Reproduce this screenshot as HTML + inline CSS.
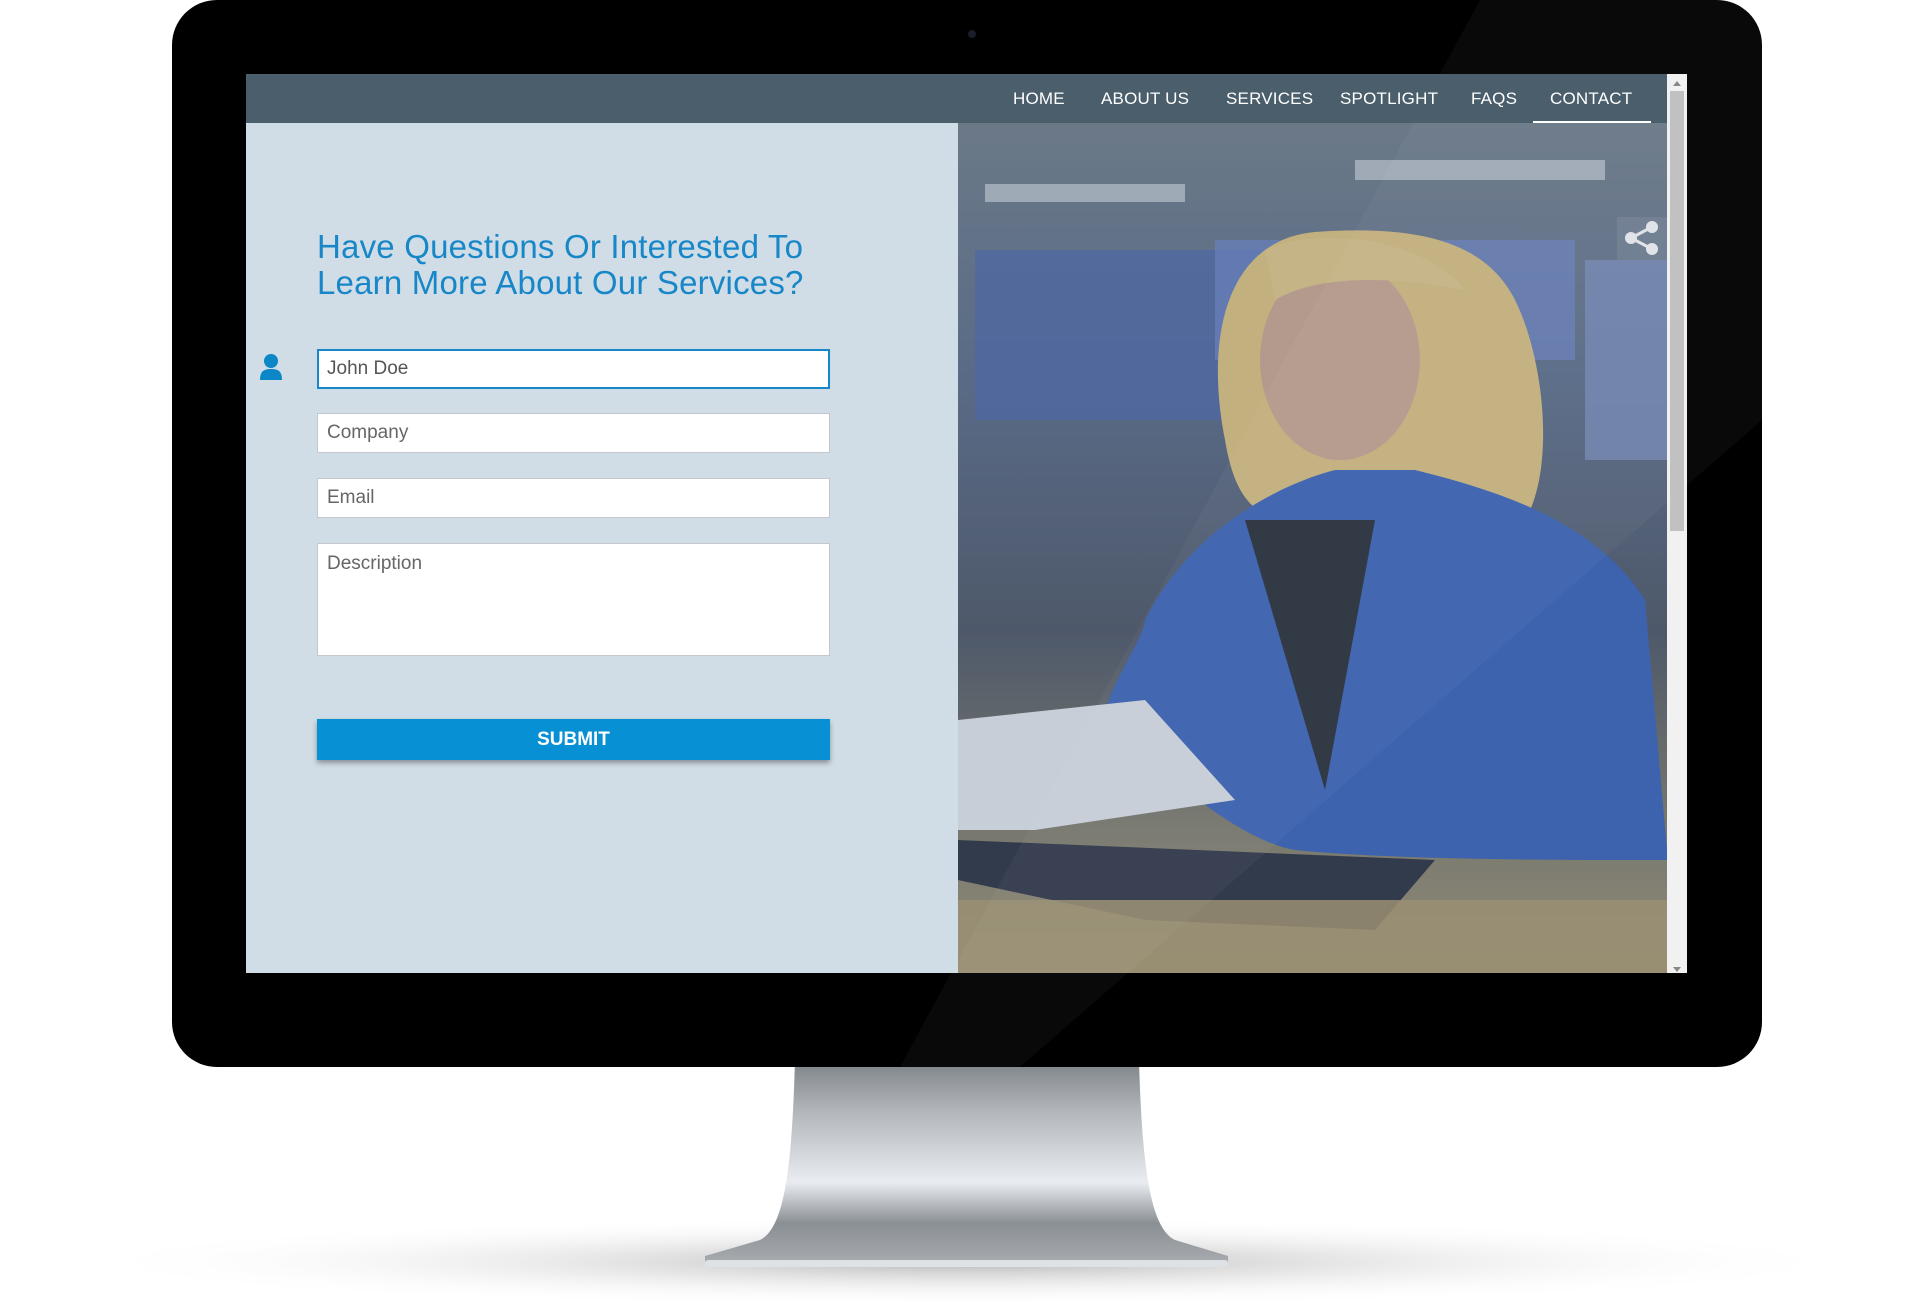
<!DOCTYPE html>
<html><head><meta charset="utf-8">
<style>
*{margin:0;padding:0;box-sizing:border-box}
html,body{width:1932px;height:1301px;overflow:hidden;background:#fff;font-family:"Liberation Sans",sans-serif}
.abs{position:absolute}
.nav a{position:absolute;top:89px;color:#fff;font-size:17px;letter-spacing:0.2px;text-decoration:none}
.inp{position:absolute;left:317px;width:513px;background:#fff;border:1px solid #c4c8cc;color:#666;font-size:19px;padding-left:9px}
</style></head><body>
<svg class="abs" style="left:0;top:0" width="1932" height="1301">
<defs>
<radialGradient id="sh" cx="50%" cy="50%" r="50%"><stop offset="0" stop-color="#999" stop-opacity=".7"/><stop offset="1" stop-color="#fff" stop-opacity="0"/></radialGradient>
<linearGradient id="neck" x1="0" y1="0" x2="0" y2="1">
<stop offset="0" stop-color="#7d8286"/><stop offset=".25" stop-color="#b2b6ba"/><stop offset=".6" stop-color="#e9edf2"/><stop offset=".8" stop-color="#8a8f94"/><stop offset="1" stop-color="#a8acb1"/></linearGradient>
<linearGradient id="img" x1="0" y1="0" x2="0" y2="1">
<stop offset="0" stop-color="#6f7c88"/><stop offset=".3" stop-color="#5a6a88"/><stop offset=".6" stop-color="#4c5464"/><stop offset=".82" stop-color="#7c7868"/><stop offset="1" stop-color="#a09478"/></linearGradient>
</defs>
<ellipse cx="966" cy="1262" rx="900" ry="45" fill="url(#sh)"/>
<path d="M795 1060 L1139 1060 C1142 1165 1150 1228 1175 1240 L1228 1256 L1228 1264 L705 1264 L705 1256 L760 1240 C785 1228 792 1165 795 1060Z" fill="url(#neck)"/>
<rect x="705" y="1260" width="523" height="7" rx="3" fill="#dfe2e5"/>
<rect x="172" y="0" width="1590" height="1067" rx="45" fill="#000"/>
<circle cx="972" cy="34" r="4" fill="#1a1d2a"/>
<rect x="246" y="74" width="1441" height="899" fill="#d1dde6"/>
<rect x="958" y="123" width="709" height="850" fill="url(#img)"/>
<g>
<rect x="975" y="250" width="290" height="170" fill="#4e66a8" opacity=".8"/>
<rect x="1215" y="240" width="360" height="120" fill="#6a82c2" opacity=".8"/>
<rect x="1585" y="260" width="82" height="200" fill="#7f92c4" opacity=".7"/>
<rect x="985" y="184" width="200" height="18" fill="#dde2ea" opacity=".6"/>
<rect x="1355" y="160" width="250" height="20" fill="#dde2ea" opacity=".6"/>
<path d="M1315 232 C1225 240 1205 340 1225 440 C1235 500 1255 510 1275 520 L1525 520 C1555 470 1545 360 1515 300 C1485 240 1415 225 1315 232Z" fill="#d9bf7e"/>
<ellipse cx="1340" cy="360" rx="80" ry="100" fill="#c9a48e"/>
<path d="M1265 250 C1305 230 1415 230 1465 290 C1415 280 1325 270 1275 300Z" fill="#dcc487"/>
<path d="M1145 620 C1195 520 1295 480 1335 470 L1415 470 C1495 490 1595 520 1645 600 L1667 850 L1667 860 C1555 860 1395 860 1295 850 C1235 840 1145 760 1115 720 C1085 720 1145 640 1145 620Z" fill="#3760b8"/>
<path d="M1245 520 L1325 790 L1375 520Z" fill="#222630"/>
<path d="M958 720 L1145 700 L1235 800 L1035 830 L958 830Z" fill="#dfe3ea"/>
<path d="M958 840 L1435 860 L1375 930 L1145 920 L958 880Z" fill="#2a3040"/>
<rect x="958" y="900" width="709" height="73" fill="#a8966e" opacity=".85"/>
<path d="M958 123 L1667 123 L1667 973 L958 973Z" fill="#5b6f86" opacity=".18"/>
</g>
<path d="M1480 0 L1762 0 L1762 420 L1020 1067 L900 1067Z" fill="#fff" opacity=".035"/>
<rect x="246" y="74" width="1421" height="49" fill="#4a5e6b"/>
<rect x="1533" y="121" width="118" height="2" fill="#fff"/>
<rect x="1667" y="74" width="20" height="899" fill="#f1f1f1"/>
<rect x="1670" y="91" width="14" height="440" fill="#c1c1c1"/>
<path d="M1673 86 L1677 81 L1681 86Z" fill="#888"/>
<path d="M1673 967 L1677 972 L1681 967Z" fill="#888"/>
<rect x="1617" y="217" width="50" height="43" fill="#fff" opacity=".08"/>
<g stroke="#e0e4e8" stroke-width="3" fill="#e0e4e8"><line x1="1631" y1="238" x2="1652" y2="227"/><line x1="1631" y1="238" x2="1652" y2="249"/><circle cx="1631" cy="238" r="4.5"/><circle cx="1652" cy="227" r="4.5"/><circle cx="1652" cy="249" r="4.5"/></g>
<g fill="#0b86c6"><circle cx="271" cy="361" r="7"/><path d="M260 380 C260 371 264 369 271 369 C278 369 282 371 282 380Z"/></g>
</svg>
<div class="nav">
<a style="left:1013px">HOME</a><a style="left:1101px">ABOUT US</a><a style="left:1226px">SERVICES</a><a style="left:1340px">SPOTLIGHT</a><a style="left:1471px">FAQS</a><a style="left:1550px">CONTACT</a>
</div>
<div class="abs" style="left:317px;top:229px;color:#1787c8;font-size:33px;line-height:36px;letter-spacing:0.2px">Have Questions Or Interested To<br>Learn More About Our Services?</div>
<div class="inp" style="top:349px;height:40px;line-height:36px;border:2px solid #1787c8;color:#555;padding-left:8px">John Doe</div>
<div class="inp" style="top:413px;height:40px;line-height:38px">Company</div>
<div class="inp" style="top:478px;height:40px;line-height:38px">Email</div>
<div class="inp" style="top:543px;height:113px;padding-top:9px;line-height:22px">Description</div>
<div class="abs" style="left:317px;top:719px;width:513px;height:41px;background:#0790d3;color:#fff;font-size:19px;font-weight:bold;text-align:center;line-height:41px;box-shadow:0 3px 5px rgba(0,0,0,.35)">SUBMIT</div>
</body></html>
